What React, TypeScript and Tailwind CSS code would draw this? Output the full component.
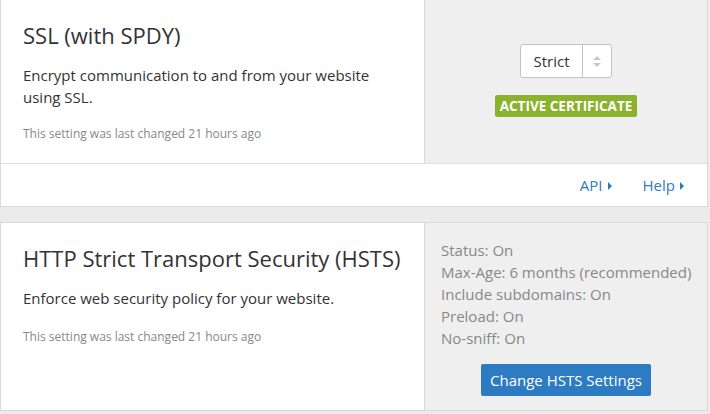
import React from "react";

function Caret() {
  return (
    <svg width="5" height="8" viewBox="0 0 5 8" className="ml-[5px] inline-block">
      <path d="M0 0 L4 4 L0 8 Z" fill="currentColor" />
    </svg>
  );
}

export default function App() {
  return (
    <div
      className="h-[414px] w-[710px] overflow-hidden bg-[#ebebeb] text-[#333]"
      style={{ fontFamily: '"Open Sans", "Liberation Sans", sans-serif' }}
    >
      {/* SSL card */}
      <section className="w-[708px] border-x border-b border-[#d9d9d9] bg-white">
        <div className="flex h-[163px]">
          <div className="w-[424px] border-r border-[#d9d9d9] px-[22px] pt-[20px]">
            <h2 className="text-[22px] leading-[30px]">SSL (with SPDY)</h2>
            <p className="mt-[14px] text-[15px] leading-[22px]">
              Encrypt communication to and from your website using SSL.
            </p>
            <p className="mt-[18px] text-[12px] leading-[16px] text-[#888]">
              This setting was last changed 21 hours ago
            </p>
          </div>
          <div className="flex flex-1 flex-col items-center bg-[#efefef] pt-[44px]">
            <div className="flex h-[34px] w-[92px] rounded-[3px] border border-[#c3c3c3] bg-white">
              <span className="flex w-[61px] items-center justify-center text-[15px]">Strict</span>
              <span className="flex flex-1 flex-col items-center justify-center gap-[3px] border-l border-[#c3c3c3]">
                <svg width="8" height="4" viewBox="0 0 8 4"><path d="M0 4 L4 0 L8 4 Z" fill="#c8c8c8" /></svg>
                <svg width="8" height="4" viewBox="0 0 8 4"><path d="M0 0 L4 4 L8 0 Z" fill="#c8c8c8" /></svg>
              </span>
            </div>
            <span className="mt-[17px] rounded-[2px] bg-[#8ab22d] px-[5px] text-[13.5px] font-bold leading-[22px] text-white">
              ACTIVE CERTIFICATE
            </span>
          </div>
        </div>
        <div className="flex h-[43px] items-center justify-end gap-[30px] border-t border-[#e0e0e0] pr-[22px] text-[15px] text-[#2f7bbf]">
          <span className="flex items-center pt-[1px]">API<Caret /></span>
          <span className="flex items-center pt-[1px]">Help<Caret /></span>
        </div>
      </section>

      {/* HSTS card */}
      <section className="mt-[15px] flex h-[189px] w-[708px] border border-[#d9d9d9] bg-white">
        <div className="w-[424px] border-r border-[#d9d9d9] px-[22px] pt-[20px]">
          <h2 className="text-[22px] leading-[30px]">HTTP Strict Transport Security (HSTS)</h2>
          <p className="mt-[14px] text-[15px] leading-[22px]">
            Enforce web security policy for your website.
          </p>
          <p className="mt-[20px] text-[12px] leading-[16px] text-[#888]">
            This setting was last changed 21 hours ago
          </p>
        </div>
        <div className="flex flex-1 flex-col bg-[#efefef] pl-[16px] pr-[4px] pt-[16px]">
          <div className="whitespace-nowrap text-[15px] leading-[22px] text-[#888]">
            <div>Status: On</div>
            <div>Max-Age: 6 months (recommended)</div>
            <div>Include subdomains: On</div>
            <div>Preload: On</div>
            <div>No-sniff: On</div>
          </div>
          <button className="ml-[40px] mt-[15px] h-[32px] w-[170px] rounded-[2px] bg-[#2d7bc3] text-[15px] text-white">
            Change HSTS Settings
          </button>
        </div>
      </section>
    </div>
  );
}
